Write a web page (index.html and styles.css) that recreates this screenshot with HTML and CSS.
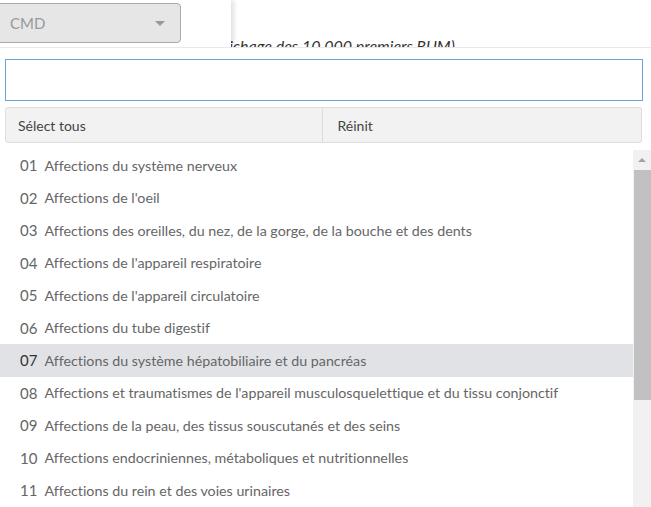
FILE: index.html
```html
<!DOCTYPE html>
<html lang="fr">
<head>
  <meta charset="UTF-8" />
  <title>CMD</title>
  <link rel="stylesheet" href="styles.css">
</head>
<body>
  <!-- Barre du haut : panneau de gauche + note -->
  <div class="haut">
    <div class="panneau">
      <div class="select-cmd">
        <span>CMD</span>
        <span class="caret"></span>
      </div>
    </div>
    <div class="note">(Affichage des 10 000 premiers RUM)</div>
  </div>

  <!-- Menu déroulant ouvert -->
  <div class="menu">
    <div class="recherche"><input type="text"></div>
    <div class="boutons">
      <button>Sélect tous</button>
      <button>Réinit</button>
    </div>
    <div class="liste-zone">
      <ul class="liste">
        <li><span class="num">01</span>Affections du système nerveux</li>
        <li><span class="num">02</span>Affections de l'oeil</li>
        <li><span class="num">03</span>Affections des oreilles, du nez, de la gorge, de la bouche et des dents</li>
        <li><span class="num">04</span>Affections de l'appareil respiratoire</li>
        <li><span class="num">05</span>Affections de l'appareil circulatoire</li>
        <li><span class="num">06</span>Affections du tube digestif</li>
        <li class="actif"><span class="num">07</span>Affections du système hépatobiliaire et du pancréas</li>
        <li><span class="num">08</span>Affections et traumatismes de l'appareil musculosquelettique et du tissu conjonctif</li>
        <li><span class="num">09</span>Affections de la peau, des tissus souscutanés et des seins</li>
        <li><span class="num">10</span>Affections endocriniennes, métaboliques et nutritionnelles</li>
        <li><span class="num">11</span>Affections du rein et des voies urinaires</li>
      </ul>
      <!-- Fausse barre de défilement -->
      <div class="defil">
        <div class="fleche"></div>
        <div class="pouce"></div>
      </div>
    </div>
  </div>
</body>
</html>
```

FILE: styles.css
```css
/* Police et fond de la page */
body {
  margin: 0;
  font-family: Lato, "Open Sans", sans-serif;
  font-variant-ligatures: none;
  background: #fff;
  color: #555;
  height: 507px;
  overflow: hidden;
}

/* Bandeau du haut, coupé par le menu */
.haut {
  display: flex;
  height: 47px;
  overflow: hidden;
}

/* Panneau blanc avec une ombre à droite */
.panneau {
  width: 231px;
  flex-shrink: 0;
  background: #fff;
  box-shadow: 3px 0 5px rgba(0, 0, 0, 0.12);
  position: relative;
  z-index: 1;
  padding-top: 3px;
}

.select-cmd {
  width: 190px;
  height: 40px;
  margin-left: -9px;
  box-sizing: border-box;
  background: #e6e6e6;
  border: 1px solid #aaa;
  border-radius: 4px;
  display: flex;
  align-items: center;
  justify-content: space-between;
  padding: 0 15px 0 18px;
  font-size: 15px;
  color: #999;
}

/* Petit triangle du select */
.caret {
  width: 0;
  height: 0;
  border-left: 5px solid transparent;
  border-right: 5px solid transparent;
  border-top: 5px solid #999;
}

/* Texte en italique à moitié caché */
.note {
  margin-left: -26px;
  padding-top: 36px;
  font-style: italic;
  font-size: 16px;
  color: #333;
  white-space: nowrap;
}

/* Le menu déroulant */
.menu {
  border-top: 1px solid #e8e8e8;
  background: #fff;
  padding: 11px 8px 0 5px;
}

.recherche input {
  width: 100%;
  height: 42px;
  box-sizing: border-box;
  border: 1px solid #66a4d6;
  outline: none;
  margin: 0;
  display: block;
}

/* Boutons Sélect tous / Réinit */
.boutons {
  display: flex;
  margin-top: 6px;
  margin-right: 1px;
}

.boutons button {
  flex: 1;
  height: 36px;
  background: #f2f2f2;
  border: 1px solid #ddd;
  text-align: left;
  padding: 0 0 0 12px;
  font-family: inherit;
  font-size: 14px;
  color: #444;
}

.boutons button:first-child {
  border-radius: 3px 0 0 3px;
}

.boutons button:last-child {
  border-left: none;
  border-radius: 0 3px 3px 0;
  padding-left: 15px;
}

/* Zone de la liste + barre de défilement */
.liste-zone {
  display: flex;
  margin: 6px -8px 0 -5px;
}

.liste {
  list-style: none;
  margin: 0;
  padding: 0;
  flex: 1;
}

.liste li {
  height: 32.5px;
  display: flex;
  align-items: center;
  padding-left: 20px;
  font-size: 14.25px;
  color: #666;
  white-space: nowrap;
}

.liste .num {
  font-size: 15px;
  color: #666;
  margin-right: 7px;
}

.liste li.actif {
  background: #e1e2e6;
}

.liste li.actif .num {
  color: #333;
}

.defil {
  width: 18px;
  background: #f1f1f1;
  margin-top: 1px;
}

.fleche {
  height: 20px;
  display: flex;
  align-items: center;
  justify-content: center;
}

.fleche::before {
  content: "";
  border-left: 4px solid transparent;
  border-right: 4px solid transparent;
  border-bottom: 4px solid #a3a3a3;
}

.pouce {
  height: 230px;
  margin-left: 1px;
  background: #c1c1c1;
}
```
